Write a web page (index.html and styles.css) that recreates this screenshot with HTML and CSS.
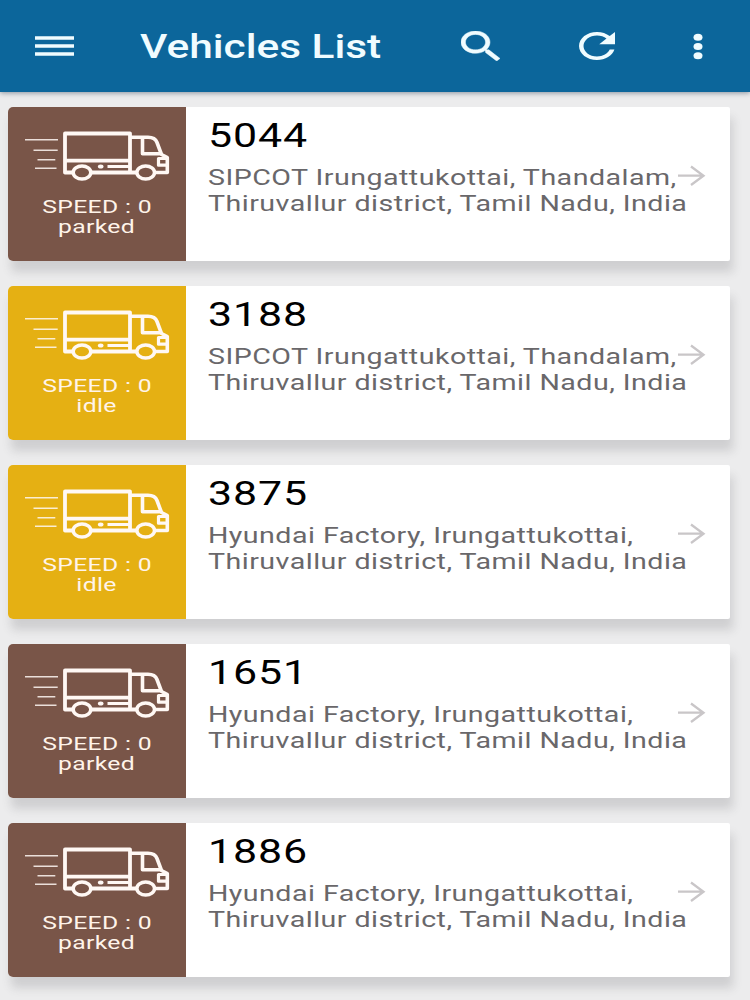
FILE: index.html
```html
<!DOCTYPE html>
<html lang="en">
<head>
  <meta charset="UTF-8">
  <title>Vehicles List</title>
  <link rel="stylesheet" href="styles.css">
</head>
<body>

  <header class="toolbar">
    <svg class="menu-icon" width="39" height="22" viewBox="0 0 39 22">
      <path d="M0 3H39M0 11H39M0 19H39" stroke="#f0fcff" stroke-width="3.400"/>
    </svg>
    <h1 class="title"><span class="wide">Vehicles List</span></h1>
    <svg class="search-icon" width="39" height="30" viewBox="3 3 17.490 17.490" preserveAspectRatio="none" fill="#f0fcff" stroke="#f0fcff" stroke-width="0.250">
      <path d="M15.500 14h-.79l-.28-.27C15.410 12.590 16 11.110 16 9.500 16 5.910 13.090 3 9.500 3S3 5.910 3 9.500 5.910 16 9.500 16c1.610 0 3.090-.59 4.230-1.570l.27.28v.79l5 4.990L20.490 19l-4.990-5zm-6 0C7.010 14 5 11.990 5 9.500S7.010 5 9.500 5 14 7.010 14 9.500 11.990 14 9.500 14z"/>
    </svg>
    <svg class="refresh-icon" width="36" height="28" viewBox="4 4 16 16" preserveAspectRatio="none" fill="#f0fcff">
      <path d="M17.650 6.350C16.200 4.900 14.210 4 12 4c-4.420 0-7.990 3.580-7.990 8s3.570 8 7.990 8c3.730 0 6.840-2.550 7.730-6h-2.080c-.82 2.330-3.040 4-5.650 4-3.310 0-6-2.690-6-6s2.690-6 6-6c1.660 0 3.140.69 4.220 1.780L13 11h7V4l-2.350 2.350z"/>
    </svg>
    <svg class="more-icon" width="10" height="27" viewBox="0 0 10 27" fill="#f0fcff">
      <ellipse cx="5" cy="4.200" rx="4.500" ry="3.500"/>
      <ellipse cx="5" cy="13.500" rx="4.500" ry="3.500"/>
      <ellipse cx="5" cy="22.800" rx="4.500" ry="3.500"/>
    </svg>
  </header>

  <main class="vehicles" id="vehicleList">
    <!-- Cards will be inserted here -->
  </main>

  <script>
    const sipcot = ["SIPCOT Irungattukottai, Thandalam,", "Thiruvallur district, Tamil Nadu, India"];
    const hyundai = ["Hyundai Factory, Irungattukottai,", "Thiruvallur district, Tamil Nadu, India"];

    const vehicles = [
      { number: "5044", status: "parked", address: sipcot },
      { number: "3188", status: "idle", address: sipcot },
      { number: "3875", status: "idle", address: hyundai },
      { number: "1651", status: "parked", address: hyundai },
      { number: "1886", status: "parked", address: hyundai }
    ];

    const truck = `
      <svg class="truck" width="178" height="76" viewBox="0 0 178 76" fill="none" stroke="#fff8f4">
        <path d="M17 32.700H50M25.500 43.300H49.700M29.500 52.700H47.300M27 61.200H48.500" stroke-width="1.600" opacity="0.85"/>
        <path d="M65 65.500H57V26.500H122V65.500M57 53.700H122M83.500 65.500H128.500" stroke-width="3.800" stroke-linejoin="round"/>
        <path d="M122 30.300H140Q147 30.300 149 35.500L153.500 47.500L159.300 50.500V65.500H147M134.500 30.300V46.700H153" stroke-width="3.600" stroke-linejoin="round"/>
        <path d="M160 51.500H150.500V58.200H160" stroke-width="3.200" stroke-linejoin="round"/>
        <path d="M99.500 59.500H122" stroke-width="3"/>
        <ellipse cx="92.700" cy="59.500" rx="2.800" ry="2" fill="#fff8f4" stroke="none"/>
        <ellipse cx="74" cy="65.500" rx="8.800" ry="6.500" stroke-width="3.500"/>
        <ellipse cx="137.700" cy="65.500" rx="8.800" ry="6.500" stroke-width="3.500"/>
      </svg>`;

    const list = document.getElementById('vehicleList');

    vehicles.forEach(vehicle => {
      const card = document.createElement('article');
      card.className = 'card';
      card.innerHTML = `
        <div class="tile ${vehicle.status}">
          ${truck}
          <div class="speed"><span class="wide">SPEED : 0</span></div>
          <div class="speed"><span class="wide">${vehicle.status}</span></div>
        </div>
        <div class="details">
          <h2 class="number"><span class="wide">${vehicle.number}</span></h2>
          <div class="address">
            <div><span class="wide">${vehicle.address[0]}</span></div>
            <div><span class="wide">${vehicle.address[1]}</span></div>
          </div>
        </div>
        <svg class="arrow" width="28" height="22" viewBox="0 0 28 22" fill="none" stroke="#c9c6c8" stroke-width="2.300">
          <path d="M0 10.700H25M13 1.500L25.500 10.700L13 20"/>
        </svg>
      `;
      list.appendChild(card);
    });
  </script>

</body>
</html>
```
FILE: styles.css
```css
body {
  margin: 0;
  height: 1000px;
  overflow: hidden;
  font-family: Roboto, "Liberation Sans", sans-serif;
  background-color: #ececed;
}

h1, h2 {
  margin: 0;
}

svg {
  display: block;
  flex: none;
}

/* text is stretched sideways */
.wide {
  display: inline-block;
  white-space: nowrap;
  transform: scaleX(1.3);
  transform-origin: left center;
}

.toolbar {
  position: relative;
  display: flex;
  align-items: center;
  box-sizing: border-box;
  height: 92px;
  padding-left: 35px;
  background-color: #0c669b;
  box-shadow: 0 1px 5px rgba(40, 60, 80, 0.5);
}

.title {
  width: 321px;
  margin-left: 66px;
  padding-top: 2px;
  font-size: 33px;
  font-weight: 500;
  line-height: 40px;
  color: #f0fcff;
}

.title .wide {
  transform: scaleX(1.285);
}

.refresh-icon {
  margin-left: 79px;
}

.more-icon {
  margin-left: 78px;
}

.vehicles {
  display: flex;
  flex-direction: column;
  gap: 25px;
  padding: 15px 20px 0 8px;
}

.card {
  position: relative;
  display: flex;
  height: 154px;
  border-radius: 5px 2px 2px 5px;
  background-color: #fff;
  box-shadow: 3px 11px 10px rgba(80, 76, 84, 0.18);
}

.tile {
  width: 178px;
  border-radius: 5px 0 0 5px;
  color: #fff4ea;
}

.parked {
  background-color: #795548;
}

.idle {
  background-color: #e5b013;
}

.truck {
  margin-bottom: 14px;
}

.speed {
  height: 20px;
  font-size: 19px;
  line-height: 20px;
  letter-spacing: 0.25px;
  text-align: center;
}

.speed .wide {
  transform-origin: center;
}

.details {
  padding: 9px 0 0 22px;
}

.number {
  font-size: 33px;
  font-weight: 400;
  line-height: 40px;
  letter-spacing: 0.7px;
  color: #000;
}

.address {
  margin-top: 9px;
  font-size: 22px;
  line-height: 26px;
  letter-spacing: 0.36px;
  color: #69676a;
}

.arrow {
  position: absolute;
  top: 58px;
  right: 24px;
}
```
